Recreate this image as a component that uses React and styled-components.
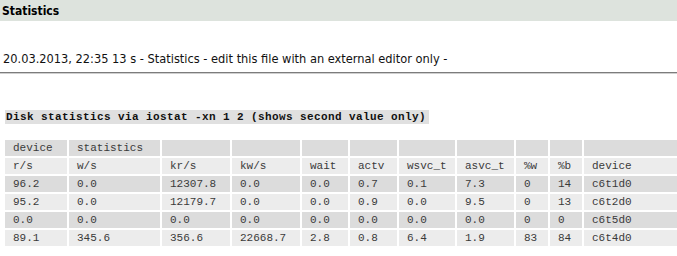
import React from "react";
import styled, { createGlobalStyle } from "styled-components";

const Global = createGlobalStyle`
  html, body { margin: 0; padding: 0; overflow: hidden; background: #fff; }
  body { font-family: "DejaVu Sans Condensed", "Liberation Sans", sans-serif; color: #000; }
`;

const Page = styled.div`
  width: 677px;
  overflow: hidden;
`;

const TitleBar = styled.div`
  height: 21px;
  background: #dde3dd;
  font-weight: bold;
  font-size: 12px;
  line-height: 22px;
  padding-left: 2px;
  color: #000;
`;

const Info = styled.p`
  margin: 30px 0 0 3px;
  font-size: 12.7px;
  line-height: 15px;
  color: #111;
`;

const Rule = styled.hr`
  margin: 6px 0 0 0;
  height: 0;
  border: 0;
  border-top: 1px solid #7c7c7c;
  border-bottom: 1px solid #cfcfcf;
`;

const Section = styled.div`
  padding: 31px 0 0 5px;
`;

const MonoTitle = styled.div`
  display: inline-block;
  background: #e0e0e0;
  font-family: "Liberation Mono", monospace;
  font-weight: bold;
  font-size: 11px;
  letter-spacing: 0.4px;
  line-height: 14px;
  padding: 0 3px 0 1px;
  color: #111;
`;

const Table = styled.table`
  margin: 14px 0 0 -2px;
  border-collapse: separate;
  border-spacing: 2px;
  table-layout: fixed;
  width: 720px;
  font-family: "Liberation Mono", monospace;
  font-size: 11px;
  color: #3a3a3a;
`;

const Cell = styled.td`
  height: 16px;
  padding: 0 0 0 8px;
  line-height: 16px;
  white-space: nowrap;
  background: ${(p) => (p.$dark ? "#dcdcdc" : "#ececec")};
`;

const widths = [62, 91, 68, 68, 46, 47, 56, 57, 32, 32, 137];

const rows = [
  ["device", "statistics", "", "", "", "", "", "", "", "", ""],
  ["r/s", "w/s", "kr/s", "kw/s", "wait", "actv", "wsvc_t", "asvc_t", "%w", "%b", "device"],
  ["96.2", "0.0", "12307.8", "0.0", "0.0", "0.7", "0.1", "7.3", "0", "14", "c6t1d0"],
  ["95.2", "0.0", "12179.7", "0.0", "0.0", "0.9", "0.0", "9.5", "0", "13", "c6t2d0"],
  ["0.0", "0.0", "0.0", "0.0", "0.0", "0.0", "0.0", "0.0", "0", "0", "c6t5d0"],
  ["89.1", "345.6", "356.6", "22668.7", "2.8", "0.8", "6.4", "1.9", "83", "84", "c6t4d0"],
];

export default function App() {
  return (
    <Page>
      <Global />
      <TitleBar>Statistics</TitleBar>
      <Info>20.03.2013, 22:35 13 s - Statistics - edit this file with an external editor only -</Info>
      <Rule />
      <Section>
        <MonoTitle>Disk statistics via iostat -xn 1 2 (shows second value only)</MonoTitle>
        <Table>
          <colgroup>
            {widths.map((w, i) => (
              <col key={i} style={{ width: w + "px" }} />
            ))}
          </colgroup>
          <tbody>
            {rows.map((r, i) => (
              <tr key={i}>
                {r.map((c, j) => (
                  <Cell key={j} $dark={i % 2 === 0}>
                    {c}
                  </Cell>
                ))}
              </tr>
            ))}
          </tbody>
        </Table>
      </Section>
    </Page>
  );
}
